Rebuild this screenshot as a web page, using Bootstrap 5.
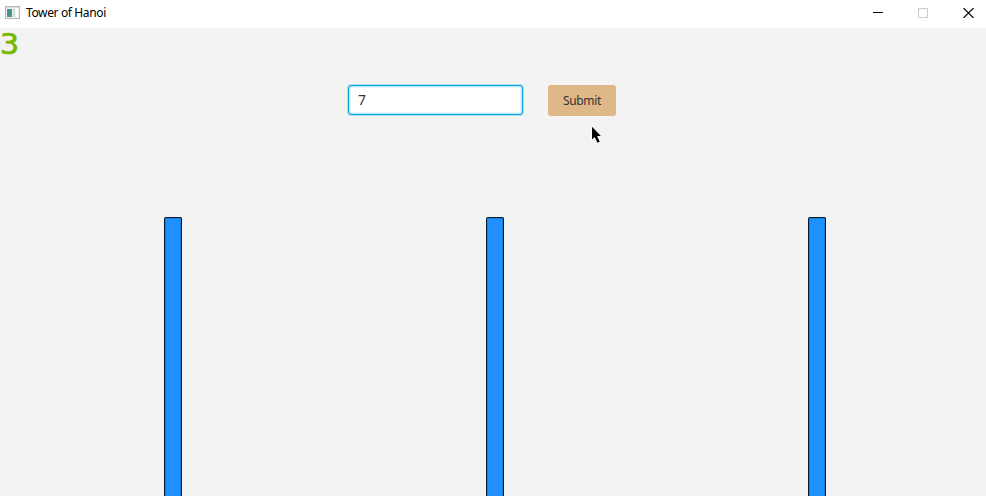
<!DOCTYPE html>
<html lang="en">
<head>
<meta charset="utf-8">
<meta name="viewport" content="width=device-width, initial-scale=1">
<title>Tower of Hanoi</title>
<link href="https://cdn.jsdelivr.net/npm/bootstrap@5.3.0/dist/css/bootstrap.min.css" rel="stylesheet">
<style>
body { background: #f3f3f3; font-family: "Segoe UI", "Noto Sans", sans-serif; font-size: 12px; color: #000; }
svg { display: block; }
.title-bar { height: 28px; background: #fff; padding: 0 12px 3px 5px; }
.window-title { font-size: 12px; line-height: 16px; letter-spacing: -.37px; margin-left: 6px; }
.window-controls { gap: 35px; }
.stage { height: 468px; }
.fps { left: 0; top: 3px; font: 400 29px/26px "DejaVu Sans Mono", monospace; color: #76b900; -webkit-text-stroke: .6px #76b900; transform: scaleX(1.1); transform-origin: left; }
.entry { padding: 57px 0 0 348px; gap: 25px; height: 189px; }
.entry .form-control { width: 175px; height: 30px; min-height: 0; padding: 0 9px 1px; border: 1px solid #039ed3; border-radius: 3px; box-shadow: 0 0 0 1px #b5e2f1, inset 0 0 0 1px #c5ebf6, inset 0 0 0 2px #e0f3fa; font-size: 14px; line-height: 27px; color: #333; }
.btn-submit { --bs-btn-bg: #deb887; --bs-btn-color: #333; --bs-btn-hover-bg: #d5ad7a; width: 68px; height: 31px; padding: 0; border: 0; border-radius: 3px; font-size: 12px; line-height: 31px; letter-spacing: -.35px; }
.pegs { padding-left: 164px; gap: 304px; }
.peg { width: 18px; flex: none; background: #1e90ff; border: 1px solid #07182b; border-bottom: 0; border-radius: 2px 2px 0 0; box-shadow: inset 1px 1px #1b7fe0, inset -1px 0 #1b7fe0; }
.pointer { left: 591px; top: 97px; }
</style>
</head>
<body class="overflow-hidden">
<header class="title-bar d-flex align-items-center">
  <svg width="15" height="13" viewBox="0 0 15 13" shape-rendering="crispEdges" aria-hidden="true">
    <defs><linearGradient id="pane" x2="1" y2="1"><stop stop-color="#4680b8"/><stop offset="1" stop-color="#46a568"/></linearGradient></defs>
    <path fill="#b5b9bc" d="M0 0h15v13H0z"/><path fill="#f4f4f4" d="M1 1h13v11H1z"/>
    <path fill="#d9dde0" d="M1 1h13v1H1z"/><path fill="url(#pane)" d="M2 3h5v8H2z"/>
    <path fill="#c9dfd4" d="M8 3h2v8H8z"/><path fill="#fff" d="M11 3h2v8h-2z"/>
  </svg>
  <span class="window-title">Tower of Hanoi</span>
  <div class="window-controls d-flex ms-auto" aria-hidden="true">
    <svg width="10" height="10" shape-rendering="crispEdges"><path d="M0 4h10v1H0z"/></svg>
    <svg width="10" height="10"><path d="M.5.5h9v9h-9z" fill="none" stroke="#ccc"/></svg>
    <svg width="11" height="10" viewBox="0 0 11 10"><path d="M.5 0l10 10M10.5 0l-10 10" fill="none" stroke="#000" stroke-width="1.1"/></svg>
  </div>
</header>
<main class="stage position-relative d-flex flex-column">
  <span class="fps position-absolute">3</span>
  <form class="entry d-flex align-items-start" onsubmit="return false">
    <input class="form-control" type="text" value="7" aria-label="Number of disks">
    <button class="btn btn-submit" type="submit">Submit</button>
  </form>
  <div class="pegs d-flex flex-grow-1">
    <div class="peg"></div><div class="peg"></div><div class="peg"></div>
  </div>
  <svg class="pointer position-absolute" width="12" height="19" viewBox="0 0 12 19" aria-hidden="true">
    <path d="M.5.8V15.5l3-2.8 2.7 5.6 3.2-1.3-2.7-5.5h4.2z" fill="#000" stroke="#fff"/>
  </svg>
</main>
<script src="https://cdn.jsdelivr.net/npm/bootstrap@5.3.0/dist/js/bootstrap.bundle.min.js"></script>
</body>
</html>
